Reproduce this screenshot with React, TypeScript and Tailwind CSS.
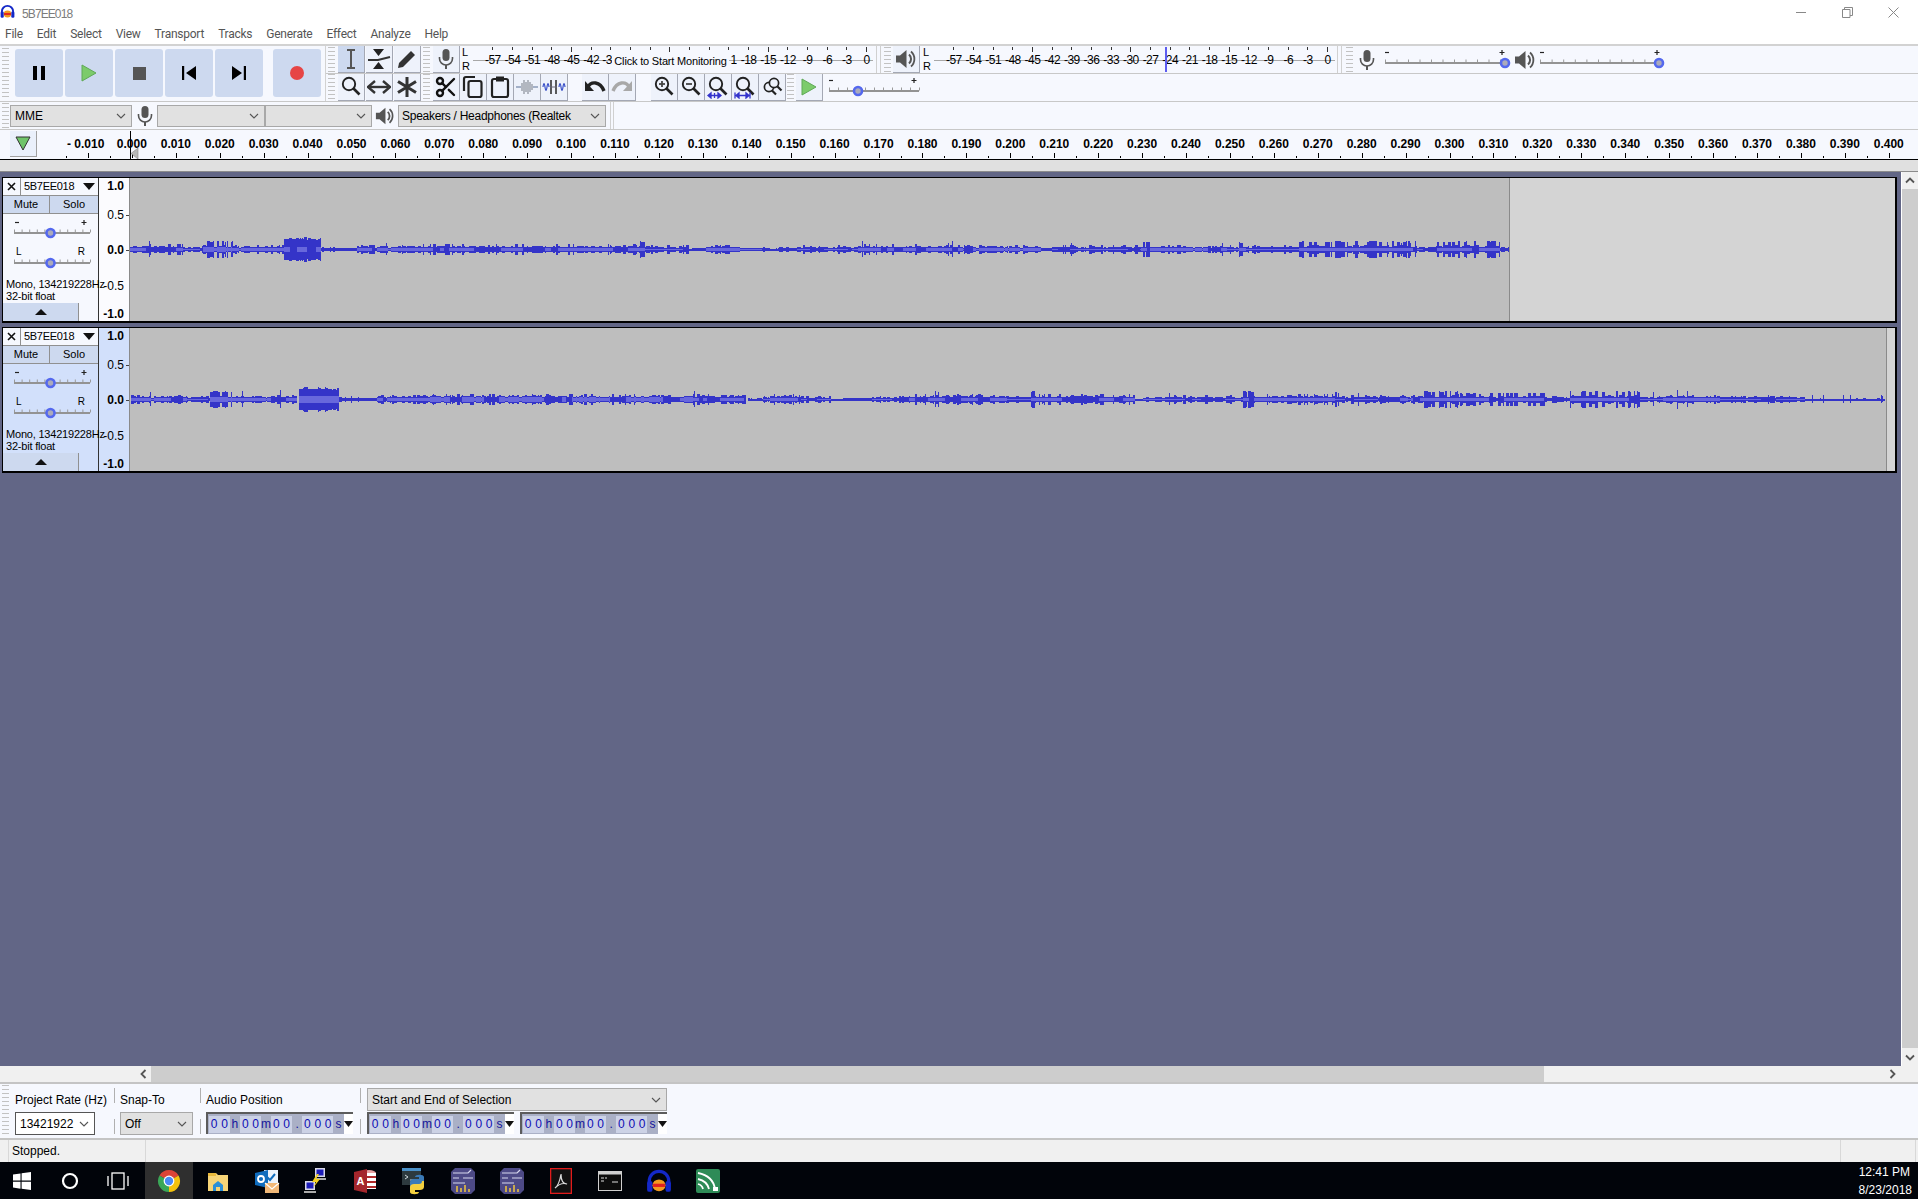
import React from "react";
import { Scissors } from "lucide-react";

const z9 = (p: number) => 130 + p / 2.45;
const z10 = (p: number) => 770 + p / 2.45;
const z8 = (p: number) => 1400 + p / 3;
type Seg = [number, number, number, number];

const seg = (f: (p: number) => number, rows: number[][]): Seg[] =>
  rows.map((r) => [f(r[0]), f(r[1]), r[2], r[3]] as Seg);

const T1: Seg[] = [
  ...seg(z9, [
    [0, 130, 3.5, 2], [130, 180, 2.5, 1], [180, 250, 8.5, 2.5], [250, 330, 3, 1.8], [330, 345, 6, 1.5], [345, 378, 3, 1.5],
    [378, 468, 12, 3], [468, 555, 1.6, 0], [555, 670, 3, 1.6], [670, 1250, 3.6, 2.2], [1250, 1262, 8, 2], [1262, 1370, 3, 1.3],
    [1370, 1410, 0.8, 0], [1410, 1500, 3, 2], [1500, 1568, 1.4, 0.5],
  ]),
  ...seg(z10, [
    [0, 20, 0.5, 0], [20, 65, 1.6, 0], [65, 215, 2.6, 1], [215, 235, 6, 2], [235, 430, 3.4, 2.2], [430, 460, 4.5, 2], [460, 665, 3.2, 2],
    [665, 690, 1, 0], [690, 735, 2.6, 1.2], [735, 750, 4.5, 1], [750, 910, 2.6, 0.8], [910, 932, 8, 2], [932, 1108, 3, 1.6],
    [1108, 1120, 7, 1.5], [1120, 1150, 2.6, 1], [1150, 1165, 7, 1.5], [1165, 1295, 3, 1.3], [1295, 1568, 8.5, 2],
  ]),
  ...seg(z8, [[0, 50, 7, 1.6], [50, 110, 2.2, 1], [110, 300, 8.5, 2], [300, 327, 2, 0]]),
];
const T2: Seg[] = [
  ...seg(z9, [
    [2, 140, 3.2, 2], [140, 195, 2.4, 1], [195, 250, 8, 2.5], [250, 280, 3, 1.5], [280, 410, 3, 2], [415, 513, 12, 3.5],
    [513, 545, 2, 0], [545, 605, 1.3, 0], [605, 735, 3, 1.6], [735, 1000, 4, 2.5], [1000, 1380, 4, 2.6], [1380, 1510, 4, 2],
    [1515, 1550, 0.8, 0], [1550, 1568, 2, 1],
  ]),
  ...seg(z10, [
    [0, 75, 4, 2.4], [75, 150, 2, 0.5], [150, 180, 0.5, 0], [180, 250, 1.3, 0], [250, 340, 2.5, 0.6], [340, 400, 3.5, 1.5], [400, 415, 8, 2],
    [415, 580, 4, 2.4], [580, 640, 3.2, 1], [640, 652, 8, 2], [652, 895, 4, 2.4], [895, 915, 0.5, 0], [915, 960, 2.2, 1], [960, 1160, 2.6, 0.7],
    [1160, 1185, 8, 1.5], [1185, 1385, 3.6, 1.6], [1385, 1395, 7, 1], [1395, 1430, 3, 1], [1430, 1442, 7, 1], [1442, 1568, 3.2, 1],
  ]),
  ...seg(z8, [
    [0, 60, 3.2, 1.6], [60, 175, 8.2, 2], [175, 330, 6.5, 2], [330, 440, 7, 2], [440, 510, 2, 0], [510, 720, 8.2, 2], [720, 790, 2.8, 1],
    [790, 870, 4, 2], [870, 960, 3, 1.5], [960, 970, 6, 1], [970, 1215, 3, 0.6], [1215, 1455, 0.5, 0],
  ]),
];
const S1: [number, number][] = [[z9(46), 8], [z9(250), 8], [z9(628), 6], [z10(225), 8], [z10(447), 8], [z8(45), 8]];
const S2: [number, number][] = [
  [z9(48), 7], [z9(275), 8], [z9(368), 9], [z9(1382), 8], [z10(405), 8], [z10(978), 6], [z8(760), 7], [z8(830), 9.5], [z8(862), 8],
  [z8(1235), 4], [z8(1268), 4], [z8(1328), 4], [z8(1350), 4], [z8(1442), 4], [z8(1447), 3],
];

function wavePaths(segs: Seg[], spikes: [number, number][], seed: number) {
  let s = seed;
  const r = () => {
    s = (s * 16807) % 2147483647;
    return s / 2147483647;
  };
  const cy = 71;
  let dark = "";
  let light = "";
  for (const [a, b, amp, rms] of segs) {
    let on = true;
    let left = 6;
    let run = 0;
    let q = 1;
    for (let x = Math.round(a); x < Math.round(b); x++) {
      if (run-- <= 0) {
        run = Math.floor(r() * 3);
        if (amp >= 10) q = 0.75 + r() * 0.25;
        else if (amp > 5) q = r() < 0.5 ? 0.8 + r() * 0.2 : 0.2 + r() * 0.3;
        else q = r() < 0.12 ? 1.35 : 0.45 + r() * 0.55;
      }
      const pk = Math.max(0.5, Math.round(amp * q));
      dark += `M${x}.5 ${cy - pk}V${cy + pk + 1}`;
      if (left-- <= 0) {
        on = r() > 0.25;
        left = 3 + Math.floor(r() * 14);
      }
      if (on && rms > 0) {
        const h = Math.round(Math.min(rms, pk));
        light += `M${x}.5 ${cy - h + 1}V${cy + h}`;
      }
    }
  }
  for (const [x, h] of spikes) dark += `M${Math.round(x)}.5 ${cy - h}V${cy + h}`;
  return { dark, light };
}

function Wave({ width, segs, spikes, seed }: { width: number; segs: Seg[]; spikes: [number, number][]; seed: number }) {
  const { dark, light } = wavePaths(segs, spikes, seed);
  return (
    <svg width={width} height={143} viewBox={`130 0 ${width} 143`} className="block shrink-0 bg-[#bebebe]" shapeRendering="crispEdges">
      <path d={dark} stroke="#3434c8" strokeWidth={1} fill="none" />
      <path d={light} stroke="#6868dc" strokeWidth={1} fill="none" />
    </svg>
  );
}

function Gripper({ className = "" }: { className?: string }) {
  return <div className={`w-[7px] bg-[repeating-linear-gradient(to_bottom,#c2c2c2_0,#c2c2c2_1px,transparent_1px,transparent_4px)] ${className}`} />;
}

function ToolBtn({ children, active = false, className = "" }: { children?: React.ReactNode; active?: boolean; className?: string }) {
  return (
    <div className={`w-[27px] h-[27px] shrink-0 flex items-center justify-center border-r border-b border-[#a4a8b4] ${active ? "bg-[#cdd9ef]" : "bg-[#eef2fb]"} ${className}`}>
      {children}
    </div>
  );
}

function TransportBtn({ children, className = "" }: { children?: React.ReactNode; className?: string }) {
  return <div className={`w-[48px] h-[48px] shrink-0 rounded-[3px] bg-[#cdd9ef] flex items-center justify-center ${className}`}>{children}</div>;
}

function MicIcon({ size = 22, color = "#555" }: { size?: number; color?: string }) {
  return (
    <svg width={size} height={size} viewBox="0 0 22 22">
      <rect x="7.5" y="1" width="7" height="12" rx="3.5" fill={color} />
      <path d="M4.5 9v1.5a6.5 6.5 0 0 0 13 0V9" fill="none" stroke={color} strokeWidth="1.6" />
      <path d="M11 17v4" stroke={color} strokeWidth="2" />
    </svg>
  );
}

function SpeakerIcon({ size = 22 }: { size?: number }) {
  return (
    <svg width={size} height={size} viewBox="0 0 22 22">
      <path d="M1 7.5h4L11.5 2v18L5 14.5H1z" fill="#555" />
      <path d="M14 6.5a6 6 0 0 1 0 9" fill="none" stroke="#555" strokeWidth="2" />
      <path d="M16 3.5a10 10 0 0 1 0 15" fill="none" stroke="#555" strokeWidth="1.8" />
    </svg>
  );
}

function Lens({ inner, below }: { inner?: "plus" | "minus"; below?: "a" | "b" }) {
  return (
    <svg width="24" height="24" viewBox="0 0 24 24">
      <circle cx="10" cy="9" r="6.2" fill="none" stroke="#222" strokeWidth="1.9" />
      <path d="M14.5 13.5l6 6" stroke="#222" strokeWidth="2.6" />
      {inner && <path d="M7 9h6" stroke="#444" strokeWidth="1.8" />}
      {inner === "plus" && <path d="M10 6v6" stroke="#444" strokeWidth="1.8" />}
      {below === "a" && <path d="M2 20.5h13M2 20.5l3-2.5v5zM15 20.5l-3-2.5v5zM8.5 18v5" stroke="#3333cc" strokeWidth="1.3" fill="#3333cc" />}
      {below === "b" && <path d="M2 20.5h15M2 17.5v6M17 17.5v6M3 20.5l3-2.5v5zM16 20.5l-3-2.5v5z" stroke="#3333cc" strokeWidth="1.3" fill="#3333cc" />}
    </svg>
  );
}

function Slider({ w, trackW, thumb, minus, plus, signs = true }: { w: number; trackW: number; thumb: number; minus?: number; plus?: number; signs?: boolean }) {
  const ticks: number[] = [];
  const step = trackW / 10;
  for (let i = 0; i <= 10; i++) ticks.push(i * step);
  return (
    <svg width={w} height={22} viewBox={`0 0 ${w} 22`} className="block shrink-0 overflow-visible">
      {signs && minus !== undefined && <path d={`M${minus - 2} 6.5h4`} stroke="#222" strokeWidth="1.2" />}
      {signs && plus !== undefined && <path d={`M${plus - 2.5} 6.5h5M${plus} 4v5`} stroke="#222" strokeWidth="1.2" />}
      {ticks.map((t) => (
        <path key={t} d={`M${t + 0.5} 13.5v3`} stroke="#9a9a9a" strokeWidth="1" />
      ))}
      <path d={`M0 17h${trackW}`} stroke="#939393" strokeWidth="2" />
      <circle cx={thumb} cy={17} r={4} fill="#aab" stroke="#5468ee" strokeWidth="2.6" />
    </svg>
  );
}

const METER = ["-57", "-54", "-51", "-48", "-45", "-42", "-39", "-36", "-33", "-30", "-27", "-24", "-21", "-18", "-15", "-12", "-9", "-6", "-3", "0"];

function Meter({ w, children, covered = false }: { w: number; children?: React.ReactNode; covered?: boolean }) {
  return (
    <div className="relative h-[27px] shrink-0 pl-[10px] flex" style={{ width: w }}>
      <div className="absolute left-0 right-0 top-[14px] h-px bg-[#a8a8a8]" />
      {METER.map((m, i) => {
        const gone = covered && i >= 7 && i <= 11;
        const clipEnd = covered && i === 6;
        const clipStart = covered && i === 12;
        return (
          <div key={m} className="relative w-[19.68px] flex flex-col items-center shrink-0">
            <div className={`w-px bg-[#333] ${i % 5 === 4 ? "h-[5px]" : "h-[3px]"} mt-[1px]`} />
            {gone ? null : clipEnd ? (
              <span className="mt-[3px] w-[17px] pr-[7px] h-[14px] overflow-hidden leading-[14px] text-[12px] tracking-[-0.5px] text-black whitespace-nowrap">-3</span>
            ) : clipStart ? (
              <span className="mt-[3px] w-[17px] pl-[10px] h-[14px] overflow-hidden leading-[14px] text-[12px] tracking-[-0.5px] text-black whitespace-nowrap">1</span>
            ) : (
              <span className={`leading-[14px] text-[12px] tracking-[-0.5px] text-black whitespace-nowrap ${i % 5 === 4 ? "mt-[1px]" : "mt-[3px]"}`}>{m}</span>
            )}
          </div>
        );
      })}
      {children}
    </div>
  );
}

function LR() {
  return (
    <div className="w-[9px] h-[27px] flex flex-col justify-between text-[11px] leading-[13px] text-black shrink-0">
      <span>L</span>
      <span>R</span>
    </div>
  );
}

function Combo({ label, className = "", white = false, tight = false }: { label?: string; className?: string; white?: boolean; tight?: boolean }) {
  return (
    <div className={`flex items-center justify-between border ${white ? "bg-white border-[#555]" : "bg-[#e1e1e1] border-[#a8a8a8]"} ${className}`}>
      <span className={`text-[12px] text-black whitespace-nowrap ${tight ? "pl-[3px] tracking-[-0.27px]" : "pl-[4px]"}`}>{label}</span>
      <svg width="10" height="6" viewBox="0 0 10 6" className="mr-[5px] shrink-0">
        <path d="M1 1l4 4 4-4" fill="none" stroke="#555" strokeWidth="1.1" />
      </svg>
    </div>
  );
}

function MenuBar() {
  const items = ["File", "Edit", "Select", "View", "Transport", "Tracks", "Generate", "Effect", "Analyze", "Help"];
  return (
    <div className="h-[20px] flex items-center pl-[5px] gap-[14px] bg-white [font-family:Roboto,sans-serif] text-[12px] tracking-[-0.25px] text-[#555]">
      {items.map((m) => (
        <span key={m}>{m}</span>
      ))}
    </div>
  );
}

function AudacityIcon({ size = 16 }: { size?: number }) {
  return (
    <svg width={size} height={size} viewBox="0 0 24 24">
      <path d="M3 17v-5a9 9 0 0 1 18 0v5" fill="none" stroke="#1428c8" strokeWidth="3" />
      <rect x="1" y="12" width="5" height="10" rx="2" fill="#1428c8" />
      <rect x="18" y="12" width="5" height="10" rx="2" fill="#1428c8" />
      <ellipse cx="12" cy="16" rx="6" ry="5.5" fill="#f29a1f" />
      <path d="M6.5 16h11" stroke="#e02020" strokeWidth="3" />
    </svg>
  );
}

function Toolbars() {
  return (
    <div className="bg-[#f6f8fe] border-t-2 border-[#d2d2d2]">
      <div className="h-[56px] flex border-b border-[#c8c8c8]">
        <div className="w-[326px] shrink-0 flex border-r border-[#d2d2d2]">
          <Gripper className="ml-[2px] mt-[2px] h-[50px]" />
          <div className="flex pt-[3px] pl-[6px] gap-[2px]">
            <TransportBtn>
              <svg width="12" height="14" viewBox="0 0 12 14"><path d="M0 0h4v14H0zM8 0h4v14H8z" fill="#000" /></svg>
            </TransportBtn>
            <TransportBtn>
              <svg width="16" height="18" viewBox="0 0 16 18"><path d="M1 1l14 8-14 8z" fill="#7ccb6b" stroke="#5fa957" /></svg>
            </TransportBtn>
            <TransportBtn>
              <svg width="13" height="13" viewBox="0 0 13 13"><rect width="13" height="13" fill="#555" /></svg>
            </TransportBtn>
            <TransportBtn>
              <svg width="14" height="14" viewBox="0 0 14 14"><path d="M0 0h2.2v14H0zM4 7l10-7v14z" fill="#000" /></svg>
            </TransportBtn>
            <TransportBtn>
              <svg width="14" height="14" viewBox="0 0 14 14"><path d="M11.8 0H14v14h-2.2zM10 7L0 0v14z" fill="#000" /></svg>
            </TransportBtn>
            <TransportBtn className="ml-[8px]">
              <svg width="14" height="14" viewBox="0 0 14 14"><circle cx="7" cy="7" r="7" fill="#e64545" /></svg>
            </TransportBtn>
          </div>
        </div>
        <div className="flex-1 flex flex-col">
          <div className="h-[28px] flex border-b border-[#c8c8c8]">
            <Gripper className="ml-[2px] h-[26px] mt-[1px]" />
            <div className="w-[3px]" />
            <ToolBtn active>
              <svg width="20" height="22" viewBox="0 0 20 22"><path d="M6 2h8M10 2v18M6 20h8" stroke="#555" strokeWidth="2" fill="none" /></svg>
            </ToolBtn>
            <ToolBtn className="ml-[1px]">
              <svg width="24" height="22" viewBox="0 0 24 22">
                <path d="M6 1h11l-5.5 7zM6 21h11l-5.5-7z" fill="#222" />
                <path d="M1 12h10l12-3" stroke="#333" strokeWidth="2" fill="none" />
              </svg>
            </ToolBtn>
            <ToolBtn className="ml-[1px]">
              <svg width="22" height="22" viewBox="0 0 22 22"><path d="M3 15L15 3l4 4L7 19l-5 1z" fill="#333" /></svg>
            </ToolBtn>
            <Gripper className="ml-[2px] mr-[1px] h-[26px] mt-[1px]" />
            <div className="w-[2px]" />
            <ToolBtn><MicIcon /></ToolBtn>
            <div className="w-[2px]" />
            <LR />
            <div className="w-[2px]" />
            <Meter w={400} covered>
              <div className="absolute left-[139px] top-[6px] w-[117px] h-[18px] bg-[#f6f8fe] text-[11px] leading-[18px] text-black text-center tracking-[-0.18px] whitespace-nowrap">
                Click to Start Monitoring
              </div>
            </Meter>
            <div className="w-[3px]" />
            <div className="w-[5px] h-[27px] border-x border-[#d0d0d0]" />
            <div className="w-[2px]" />
            <Gripper className="ml-[1px] h-[26px] mt-[1px]" />
            <div className="w-[2px]" />
            <ToolBtn><SpeakerIcon /></ToolBtn>
            <div className="w-[3px]" />
            <LR />
            <div className="w-[2px]" />
            <Meter w={401}>
              <div className="absolute left-[231px] top-[1px] w-[2px] h-[25px] bg-[#5c5cf0]" />
            </Meter>
            <div className="w-[2px]" />
            <div className="w-[5px] h-[27px] border-x border-[#d0d0d0]" />
            <div className="w-[2px]" />
            <Gripper className="ml-[2px] h-[26px] mt-[1px]" />
            <div className="w-[3px]" />
            <div className="pt-[3px]"><MicIcon /></div>
            <div className="w-[7px]" />
            <Slider w={126} trackW={115} thumb={120} minus={2} plus={117} />
            <div className="w-[3px]" />
            <div className="pt-[3px]"><SpeakerIcon size={22} /></div>
            <div className="w-[4px]" />
            <Slider w={126} trackW={116} thumb={119} minus={2} plus={117} />
          </div>
          <div className="flex-1 flex">
            <Gripper className="ml-[2px] h-[26px]" />
            <div className="w-[3px]" />
            <ToolBtn>
              <Lens />
            </ToolBtn>
            <ToolBtn className="ml-[1px]">
              <svg width="24" height="14" viewBox="0 0 24 14"><path d="M3 7h18" stroke="#333" strokeWidth="2.4" /><path d="M8 1L1 7l7 6M16 1l7 6-7 6" fill="none" stroke="#333" strokeWidth="2.4" /></svg>
            </ToolBtn>
            <ToolBtn className="ml-[1px]">
              <svg width="22" height="22" viewBox="0 0 22 22"><path d="M11 1v20M2 5.5l18 11M20 5.5l-18 11" stroke="#333" strokeWidth="3" /></svg>
            </ToolBtn>
            <Gripper className="ml-[2px] mr-[1px] h-[26px]" />
            <div className="w-[2px]" />
            <ToolBtn>
              <Scissors size={24} strokeWidth={2.4} color="#111" />
            </ToolBtn>
            <ToolBtn>
              <svg width="24" height="24" viewBox="0 0 24 24"><path d="M3 16V4a2 2 0 0 1 2-2h9" fill="none" stroke="#222" strokeWidth="2.2" /><rect x="7.5" y="6" width="13" height="16" rx="2" fill="none" stroke="#222" strokeWidth="2.2" /></svg>
            </ToolBtn>
            <ToolBtn>
              <svg width="22" height="24" viewBox="0 0 22 24"><rect x="3" y="4" width="16" height="18" rx="2" fill="none" stroke="#222" strokeWidth="2.2" /><rect x="7" y="1.5" width="8" height="5" fill="#222" /></svg>
            </ToolBtn>
            <ToolBtn>
              <svg width="24" height="18" viewBox="0 0 24 18"><path d="M1 9h5M18 9h5" stroke="#8a9ab8" strokeWidth="1.4" /><path d="M7 5v8M9 2v14M11 4v10M13 2v14M15 4v10M17 6v6" stroke="#8a8f9a" strokeWidth="1.2" /></svg>
            </ToolBtn>
            <ToolBtn>
              <svg width="24" height="18" viewBox="0 0 24 18"><path d="M1 9q1-7 2 0t2 0 2 0M17 9q1-7 2 0t2 0 2 0" stroke="#3a50c8" strokeWidth="1.2" fill="none" /><path d="M9 2v14M14 2v14" stroke="#333" strokeWidth="1.6" /><path d="M8 9h7" stroke="#667" strokeWidth="1" /></svg>
            </ToolBtn>
            <div className="w-[14px]" />
            <ToolBtn>
              <svg width="24" height="20" viewBox="0 0 24 20"><path d="M5 10C8 4 17 4 21 14" fill="none" stroke="#222" strokeWidth="3.4" /><path d="M2 4v10h9z" fill="#222" /></svg>
            </ToolBtn>
            <ToolBtn>
              <svg width="24" height="20" viewBox="0 0 24 20"><path d="M19 10C16 4 7 4 3 14" fill="none" stroke="#a8a8a8" strokeWidth="3.4" /><path d="M22 4v10h-9z" fill="#a8a8a8" /></svg>
            </ToolBtn>
            <div className="w-[15px]" />
            <ToolBtn><Lens inner="plus" /></ToolBtn>
            <ToolBtn><Lens inner="minus" /></ToolBtn>
            <ToolBtn><Lens below="a" /></ToolBtn>
            <ToolBtn><Lens below="b" /></ToolBtn>
            <ToolBtn>
              <svg width="24" height="24" viewBox="0 0 24 24">
                <circle cx="9" cy="12" r="4.6" fill="none" stroke="#222" strokeWidth="1.7" />
                <circle cx="14" cy="8" r="4.6" fill="#eef2fb" stroke="#222" strokeWidth="1.7" />
                <path d="M12 15.5l4 4M17.5 11.5l4 4" stroke="#222" strokeWidth="2.2" />
              </svg>
            </ToolBtn>
            <Gripper className="ml-[1px] mr-[2px] h-[26px]" />
            <ToolBtn>
              <svg width="16" height="18" viewBox="0 0 16 18"><path d="M1 1l14 8-14 8z" fill="#7ccb6b" stroke="#5fa957" /></svg>
            </ToolBtn>
            <div className="w-[6px]" />
            <Slider w={90} trackW={90} thumb={29} minus={2} plus={85} />
          </div>
        </div>
      </div>
      <div className="h-[28px] flex items-center border-b border-[#c8c8c8]">
        <Gripper className="ml-[2px] h-[26px]" />
        <Combo label="MME" className="ml-[1px] w-[122px] h-[22px]" />
        <div className="w-[24px] flex justify-center ml-[1px]"><MicIcon size={22} /></div>
        <Combo className="w-[108px] h-[22px]" />
        <Combo className="w-[107px] h-[22px]" />
        <div className="w-[26px] flex justify-center"><SpeakerIcon size={20} /></div>
        <Combo label="Speakers / Headphones (Realtek" tight className="w-[208px] h-[22px]" />
        <div className="ml-[4px] w-[4px] h-[27px] border-x border-[#d0d0d0]" />
      </div>
    </div>
  );
}

function TimeRuler() {
  const labels: string[] = [];
  for (let i = 0; i <= 40; i++) labels.push((i / 100).toFixed(3));
  return (
    <div className="relative h-[30px] flex bg-[#f6f8fe] border-b border-black">
      <div className="w-[66px] shrink-0 pl-[10px] pt-[1px]">
        <div className="w-[27px] h-[26px] bg-[#eaf0fb] border-r border-b border-[#a0a0a0] flex items-center justify-center">
          <svg width="16" height="15" viewBox="0 0 16 15"><path d="M1 1h14L8 14z" fill="#6fc46a" stroke="#333" strokeWidth="1" /></svg>
        </div>
      </div>
      <RulerCell first label="- 0.010" />
      {labels.map((l) => (
        <RulerCell key={l} label={l} />
      ))}
      <div className="absolute left-[130px] top-px bottom-0 w-px bg-black" />
      <svg width="8" height="11" viewBox="0 0 8 11" className="absolute left-[131px] top-[18px]"><path d="M7 0v11L0 5.5z" fill="#b8b8b8" stroke="#888" strokeWidth="0.6" /></svg>
    </div>
  );
}

function RulerCell({ label, first = false }: { label: string; first?: boolean }) {
  return (
    <div className="w-[43.93px] shrink-0 flex flex-col">
      <span className={`mt-[7px] h-[14px] leading-[14px] text-[12px] font-bold text-black whitespace-nowrap ${first ? "pl-[1px]" : "text-center"}`}>{label}</span>
      <div className="mt-[2px] h-[5px] flex items-end">
        <div className="w-px h-[2px] bg-black" />
        <div className="flex-1" />
        <div className="w-px h-[5px] bg-black" />
        <div className="flex-1" />
      </div>
    </div>
  );
}

function VRuler({ selected }: { selected: boolean }) {
  const row = "flex items-center justify-end h-[14px] leading-[14px] text-[12px] text-black";
  const tick = <span className="w-[3px] h-px bg-[#444] ml-[2px]" />;
  const gap = <span className="w-[3px] ml-[2px]" />;
  return (
    <div className={`w-[31px] shrink-0 h-[143px] border-r border-[#8a8a8a] ${selected ? "bg-[#d2e0fb]" : "bg-[#fbfbfe]"}`}>
      <div className={`${row} font-bold mt-[1px]`}>1.0{gap}</div>
      <div className={`${row} mt-[15px]`}>0.5{tick}</div>
      <div className={`${row} font-bold mt-[21px]`}>0.0{tick}</div>
      <div className={`${row} mt-[22px]`}>-0.5{gap}</div>
      <div className={`${row} font-bold mt-[14px]`}>-1.0{gap}</div>
    </div>
  );
}

function TrackPanel({ selected }: { selected: boolean }) {
  return (
    <div className={`relative z-10 w-[96px] h-[143px] shrink-0 flex flex-col border-r border-[#333] text-[11px] text-black ${selected ? "bg-[#d2e0fb]" : "bg-[#f6f8fe]"}`}>
      <div className="h-[18px] flex shrink-0">
        <div className="w-[18px] border-r border-b border-[#909090] flex items-center justify-center bg-[#f6f8fe]">
          <svg width="9" height="9" viewBox="0 0 9 9"><path d="M1 1l7 7M8 1L1 8" stroke="#111" strokeWidth="1.6" /></svg>
        </div>
        <div className="flex-1 bg-[#f6f8fe] border-b border-[#909090] flex items-center justify-between pl-[3px] pr-[2px]">
          <span className="tracking-[-0.3px]">5B7EE018</span>
          <svg width="12" height="7" viewBox="0 0 12 7" className="mr-[1px]"><path d="M0 0h12L6 7z" fill="#111" /></svg>
        </div>
      </div>
      <div className="h-[18px] flex shrink-0">
        <div className="w-[47px] bg-[#cdd9ef] border-r border-b border-[#909090] flex items-center justify-center">Mute</div>
        <div className="flex-1 bg-[#cdd9ef] border-b border-[#909090] flex items-center justify-center">Solo</div>
      </div>
      <div className="pl-[11px] mt-[2px] h-[22px]">
        <Slider w={76} trackW={76} thumb={36.5} minus={3} plus={70} />
      </div>
      <div className="mt-[8px] mx-[11px] flex justify-between leading-[12px] text-[10px] px-[2px] h-[12px]">
        <span>L</span>
        <span>R</span>
      </div>
      <div className="pl-[11px] -mt-[12px] h-[22px]">
        <Slider w={76} trackW={76} thumb={36.5} signs={false} />
      </div>
      <div className="mt-[10px] pl-[3px] leading-[12px] whitespace-nowrap tracking-[-0.2px] h-[24px]">
        <div>Mono, 134219228Hz</div>
        <div>32-bit float</div>
      </div>
      <div className="mt-auto w-[76px] h-[18px] bg-[#cdd9ef] border-r border-[#909090] flex items-center justify-center">
        <svg width="12" height="6" viewBox="0 0 12 6"><path d="M0 6h12L6 0z" fill="#111" /></svg>
      </div>
    </div>
  );
}

function Track({ selected, waveW, segs, spikes, seed }: { selected: boolean; waveW: number; segs: Seg[]; spikes: [number, number][]; seed: number }) {
  return (
    <div className="ml-[2px] w-[1895px] flex border-t border-l border-black border-r-2 border-b-2">
      <TrackPanel selected={selected} />
      <VRuler selected={selected} />
      <Wave width={waveW} segs={segs} spikes={spikes} seed={seed} />
      <div className="flex-1 bg-[#d4d4d4] border-l border-[#8a8a8a]" />
    </div>
  );
}

function NumCtrl() {
  const cell = "h-[17px] w-[11px] flex items-center justify-center text-[12px] leading-none";
  const d = `${cell} bg-[#ccd2e6] text-[#0c0cb4]`;
  const u = `${cell} text-[#14149c]`;
  return (
    <div className="w-[147px] h-[22px] bg-[#aab0c6] border-t-2 border-l-2 border-[#5c5c5c] flex items-center pl-[1px] shrink-0">
      <span className={d}>0</span><span className={d}>0</span><span className={u}>h</span>
      <span className={d}>0</span><span className={d}>0</span><span className={u}>m</span>
      <span className={d}>0</span><span className={d}>0</span><span className={u}>.</span>
      <span className={d}>0</span><span className={d}>0</span><span className={d}>0</span><span className={u}>s</span>
      <div className="ml-auto w-[10px] h-[20px] bg-white flex items-center justify-center">
        <svg width="9" height="6" viewBox="0 0 9 6"><path d="M0 0h9L4.5 6z" fill="#111" /></svg>
      </div>
    </div>
  );
}

function VSep() {
  return (
    <div className="w-px h-full flex flex-col justify-between py-[4px] shrink-0">
      <div className="h-[15px] bg-[#b0b0b0]" />
      <div className="h-[15px] bg-[#b0b0b0]" />
    </div>
  );
}

function SelectionBar() {
  return (
    <div className="h-[58px] bg-[#f6f8fe] border-y-2 border-[#c4c4c4] flex text-[12px] text-black shrink-0">
      <Gripper className="ml-[2px] mt-[1px] h-[50px]" />
      <div className="ml-[6px] w-[99px] flex flex-col pt-[4px] shrink-0">
        <div className="h-[24px] leading-[24px] whitespace-nowrap">Project Rate (Hz)</div>
        <Combo label="13421922" white className="w-[80px] h-[23px]" />
      </div>
      <VSep />
      <div className="ml-[5px] w-[80px] flex flex-col pt-[4px] shrink-0">
        <div className="h-[24px] leading-[24px]">Snap-To</div>
        <Combo label="Off" className="w-[73px] h-[23px]" />
      </div>
      <VSep />
      <div className="ml-[5px] w-[154px] flex flex-col pt-[4px] shrink-0">
        <div className="h-[24px] leading-[24px]">Audio Position</div>
        <NumCtrl />
      </div>
      <VSep />
      <div className="ml-[6px] w-[300px] flex flex-col pt-[4px] shrink-0">
        <Combo label="Start and End of Selection" className="w-[300px] h-[23px] mb-[1px]" />
        <div className="flex justify-between">
          <NumCtrl />
          <NumCtrl />
        </div>
      </div>
    </div>
  );
}

function WinLogo() {
  return (
    <svg width="18" height="18" viewBox="0 0 18 18"><path d="M0 2.5L7.5 1.4v7.2H0zM8.6 1.3L18 0v8.6H8.6zM0 9.7h7.5v7L0 15.6zM8.6 9.7H18V18l-9.4-1.3z" fill="#fff" /></svg>
  );
}

function TaskIcons() {
  const cell = "w-[49px] h-full flex items-center justify-center shrink-0";
  return (
    <>
      <div className="w-[43px] h-full flex items-center justify-center shrink-0"><WinLogo /></div>
      <div className="ml-[3px] w-[48px] h-full flex items-center justify-center shrink-0">
        <svg width="18" height="18" viewBox="0 0 18 18"><circle cx="9" cy="9" r="7" fill="none" stroke="#fff" strokeWidth="2.2" /></svg>
      </div>
      <div className="w-[48px] h-full flex items-center justify-center shrink-0">
        <svg width="22" height="18" viewBox="0 0 22 18"><rect x="5" y="1" width="12" height="16" fill="none" stroke="#fff" strokeWidth="1.3" /><path d="M1 4v10M21 4v10" stroke="#fff" strokeWidth="1.3" /></svg>
      </div>
      <div className="ml-[3px] w-[48px] h-full bg-[#2f2f2f] flex items-center justify-center shrink-0">
        <svg width="24" height="24" viewBox="0 0 24 24">
          <path d="M12 12L2.47 6.5A11 11 0 0 1 21.53 6.5z" fill="#db4437" />
          <path d="M12 12L21.53 6.5A11 11 0 0 1 12 23z" fill="#f4c20d" />
          <path d="M12 12L12 23A11 11 0 0 1 2.47 6.5z" fill="#3aa757" />
          <circle cx="12" cy="12" r="5.4" fill="#fff" />
          <circle cx="12" cy="12" r="4.2" fill="#4a8af4" />
        </svg>
      </div>
      <div className={cell}>
        <svg width="22" height="22" viewBox="0 0 22 22"><path d="M1 3h8l2 2h10v16H1z" fill="#f6d477" /><path d="M1 3h8v3H1z" fill="#e8b93c" /><path d="M6 21v-6l5-4 5 4v6h-3v-4H9v4z" fill="#2a8fd8" /></svg>
      </div>
      <div className={cell}>
        <svg width="26" height="26" viewBox="0 0 26 26"><rect x="10" y="2" width="14" height="14" fill="#eaf2fb" /><path d="M13 9l3 3 5-6" stroke="#0f6cbd" strokeWidth="2" fill="none" /><path d="M1 5l13-3v18L1 17z" fill="#0f6cbd" /><circle cx="7" cy="11" r="3" fill="none" stroke="#fff" strokeWidth="1.8" /><rect x="11" y="15" width="14" height="10" fill="#f0b878" /><path d="M11 15l7 6 7-6" stroke="#fff" strokeWidth="1.2" fill="none" /></svg>
      </div>
      <div className={cell}>
        <svg width="26" height="28" viewBox="0 0 26 28"><rect x="12" y="1" width="10" height="9" fill="#d8d8e8" /><rect x="13.5" y="2.5" width="7" height="6" fill="#1c1cb8" /><rect x="2" y="14" width="10" height="9" fill="#d8d8e8" /><rect x="3.5" y="15.5" width="7" height="6" fill="#1c1cb8" /><rect x="1" y="24" width="12" height="2" fill="#aaa" /><rect x="12" y="11" width="11" height="2" fill="#aaa" /><path d="M14 7l-5 8h4l-3 6 7-9h-4l3-5z" fill="#f4d020" /></svg>
      </div>
      <div className={cell}>
        <svg width="24" height="26" viewBox="0 0 24 26"><ellipse cx="16" cy="5" rx="7" ry="3" fill="#e8a0a0" /><rect x="9" y="5" width="14" height="16" fill="#fff" /><path d="M9 9h14M9 14h14M9 19h14" stroke="#b02a2a" strokeWidth="2.2" /><path d="M1 4l13-3v24L1 22z" fill="#a4262c" /><text x="7.5" y="17" fontSize="11" fontWeight="700" fill="#fff" textAnchor="middle" fontFamily="Liberation Sans">A</text></svg>
      </div>
      <div className={cell}>
        <svg width="24" height="28" viewBox="0 0 24 28"><rect x="0" y="1" width="19" height="17" fill="#2d3a3f" /><rect x="0" y="1" width="19" height="3" fill="#4a90c8" /><path d="M3 8l3 2-3 2M8 13h4" stroke="#cfd8dc" fill="none" /><path d="M8 21v-6c0-2 2-3 4-3h5v-2h-4c0-3 9-3 9 0v5c0 2-2 3-4 3h-5c-2 0-3 1-3 3z" fill="#3a7ab8" /><path d="M22 14v6c0 2-2 3-4 3h-5v2h4c0 3-9 3-9 0v-5c0-2 2-3 4-3h5c2 0 3-1 3-3z" fill="#f4d03f" /></svg>
      </div>
      {[0, 1].map((k) => (
        <div key={k} className={cell}>
          <svg width="24" height="26" viewBox="0 0 24 26"><path d="M4 0h16l4 4v18l-4 4H4l-4-4V4z" fill="#4d4a86" /><path d="M2 5h15l3-3M2 10h6M12 10h10M2 15h12" stroke="#d8d8ee" strokeWidth="1.2" fill="none" /><path d="M6 24v-6M10 24v-4M14 24v-7M18 24v-3" stroke="#e8c040" strokeWidth="1.6" /></svg>
        </div>
      ))}
      <div className={cell}>
        <svg width="22" height="26" viewBox="0 0 22 26"><rect x="0.5" y="0.5" width="21" height="25" fill="#111" stroke="#e01b1b" strokeWidth="1.6" /><path d="M11 6c-1 6-3 12-6 14 4-4 9-5 12-4-4 0-6-4-6-10z" fill="none" stroke="#ddd" strokeWidth="1.2" /></svg>
      </div>
      <div className={cell}>
        <svg width="24" height="20" viewBox="0 0 24 20"><rect x="0.5" y="0.5" width="23" height="19" fill="#0c0c0c" stroke="#cfcfcf" /><rect x="1" y="1" width="22" height="2.5" fill="#cfcfcf" /><path d="M3 7h3M7 7h2M3 10h3M14 11h6" stroke="#ddd" /></svg>
      </div>
      <div className={cell}><AudacityIcon size={26} /></div>
      <div className={cell}>
        <svg width="24" height="26" viewBox="0 0 24 26"><rect x="0" y="1" width="24" height="24" rx="2" fill="#2e8b57" /><path d="M2 5q15 3 17 16M2 11q9 2 11 10M2 16q4 1 5 5" stroke="#fff" strokeWidth="1.8" fill="none" /><rect x="17" y="19" width="5" height="4" fill="#fff" /></svg>
      </div>
    </>
  );
}

function HScroll() {
  return (
    <div className="h-[16px] flex items-center bg-[#f0f0f0] shrink-0">
      <div className="w-[135px]" />
      <div className="w-[16px] flex justify-center">
        <svg width="7" height="10" viewBox="0 0 7 10"><path d="M5.5 1L1.5 5l4 4" fill="none" stroke="#555" strokeWidth="1.8" /></svg>
      </div>
      <div className="w-[1393px] h-full bg-[#cdcdcd]" />
      <div className="w-[340px]" />
      <div className="w-[16px] flex justify-center">
        <svg width="7" height="10" viewBox="0 0 7 10"><path d="M1.5 1l4 4-4 4" fill="none" stroke="#555" strokeWidth="1.8" /></svg>
      </div>
    </div>
  );
}

export default function App() {
  return (
    <div className="w-[1918px] h-[1199px] flex flex-col overflow-hidden bg-white [font-family:'Liberation_Sans',sans-serif]">
      <div className="h-[24px] flex bg-white shrink-0">
        <div className="pt-[4px]"><AudacityIcon size={15} /></div>
        <span className="ml-[7px] pt-[7px] leading-[14px] text-[12px] tracking-[-0.9px] text-[#7c7c7c]">5B7EE018</span>
        <div className="ml-auto flex h-full pr-[2px]">
          <div className="w-[46px] flex items-center justify-center">
            <svg width="11" height="11" viewBox="0 0 11 11"><path d="M0 5.5h10" stroke="#888" /></svg>
          </div>
          <div className="w-[46px] flex items-center justify-center">
            <svg width="11" height="11" viewBox="0 0 11 11"><path d="M0.5 2.5h7.5v8h-7.5zM2.5 2.5v-2h8v8h-2.5" fill="none" stroke="#888" /></svg>
          </div>
          <div className="w-[46px] flex items-center justify-center">
            <svg width="11" height="11" viewBox="0 0 11 11"><path d="M0.5 0.5l10 10M10.5 0.5l-10 10" stroke="#888" /></svg>
          </div>
        </div>
      </div>
      <MenuBar />
      <Toolbars />
      <TimeRuler />
      <div className="h-[12px] bg-[#e0e0e0] border-b border-[#8c8c8c] shrink-0" />
      <div className="flex-1 flex min-h-0">
        <div className="flex-1 bg-[#626686] pt-[5px] flex flex-col gap-[4px]">
          <Track selected={false} waveW={1379} segs={T1} spikes={S1} seed={7331} />
          <Track selected waveW={1756} segs={T2} spikes={S2} seed={90127} />
        </div>
        <div className="w-[17px] shrink-0 flex flex-col bg-[#cdcdcd] border-l border-white">
          <div className="h-[17px] bg-[#f0f0f0] flex items-center justify-center">
            <svg width="10" height="7" viewBox="0 0 10 7"><path d="M1 5.5l4-4 4 4" fill="none" stroke="#555" strokeWidth="1.8" /></svg>
          </div>
          <div className="flex-1" />
          <div className="h-[18px] bg-[#f0f0f0] flex items-center justify-center">
            <svg width="10" height="7" viewBox="0 0 10 7"><path d="M1 1.5l4 4 4-4" fill="none" stroke="#555" strokeWidth="1.8" /></svg>
          </div>
        </div>
      </div>
      <HScroll />
      <SelectionBar />
      <div className="h-[22px] bg-[#f0f0f0] flex text-[12px] text-black shrink-0">
        <div className="ml-[8px] w-[138px] border-x border-[#d8d8d8] pl-[3px] leading-[22px]">Stopped.</div>
        <div className="ml-auto w-[76px] mr-[2px] border-x border-[#d8d8d8]" />
      </div>
      <div className="h-[37px] bg-[#01040a] flex items-center shrink-0">
        <TaskIcons />
        <div className="ml-auto pr-[6px] flex flex-col items-end text-[12px] leading-[18px] text-white">
          <span className="pr-[2px]">12:41 PM</span>
          <span>8/23/2018</span>
        </div>
      </div>
    </div>
  );
}
